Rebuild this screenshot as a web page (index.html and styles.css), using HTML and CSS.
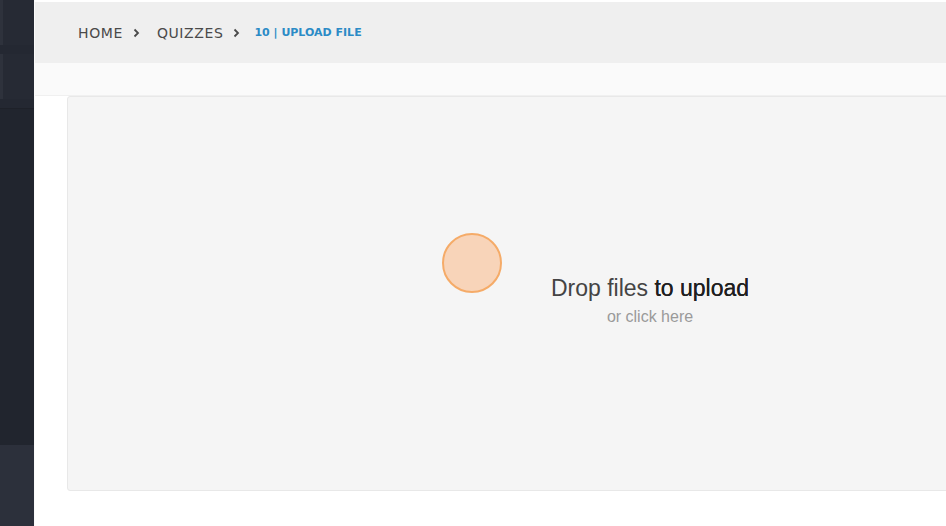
FILE: index.html
```html
<!DOCTYPE html>
<html lang="en">
<head>
    <meta charset="UTF-8">
    <meta name="viewport" content="width=device-width, initial-scale=1.0">
    <title>Quizzes - Upload File</title>
    <link rel="stylesheet" href="styles.css">
</head>
<body>
    <div class="layout">
        <aside class="sidebar">
            <div class="side-item"></div>
            <div class="side-item"></div>
            <div class="side-menu"></div>
            <div class="side-footer"></div>
        </aside>

        <main class="main">
            <div class="breadcrumb">
                <a class="crumb" href="#">HOME</a>
                <svg class="sep" width="7" height="10" viewBox="0 0 7 10"><path d="M1.5 1.5 L5 5 L1.5 8.5" fill="none" stroke="#4a4a4a" stroke-width="1.8"/></svg>
                <a class="crumb" href="#">QUIZZES</a>
                <svg class="sep" width="7" height="10" viewBox="0 0 7 10"><path d="M1.5 1.5 L5 5 L1.5 8.5" fill="none" stroke="#4a4a4a" stroke-width="1.8"/></svg>
                <span class="crumb current">10 | UPLOAD FILE</span>
            </div>
            <div class="subbar"></div>

            <div class="content">
                <div class="dropzone">
                    <p class="drop-title">Drop files <strong>to upload</strong></p>
                    <p class="drop-sub">or click here</p>
                </div>
            </div>
        </main>
    </div>

    <!-- click marker -->
    <div class="click-dot"></div>
</body>
</html>
```

FILE: styles.css
```css
body {
    margin: 0;
    overflow: hidden;
    background-color: #fff;
    font-family: "Liberation Sans", Arial, sans-serif;
}

.layout {
    display: flex;
    height: 526px;
}

.sidebar {
    width: 34px;
    flex-shrink: 0;
    display: flex;
    flex-direction: column;
    background-color: #242832;
}

.side-item {
    height: 45px;
    margin-bottom: 9px;
    background-color: #262a34;
    border-left: 3px solid #2e323c;
}

.side-menu {
    flex: 1;
    background-color: #21252e;
    border-top: 1px solid #1e2129;
}

.side-footer {
    height: 81px;
    background-color: #2c303b;
}

.main {
    flex: 1;
    min-width: 0;
    display: flex;
    flex-direction: column;
    border-left: 1px solid #fafafa;
}

.breadcrumb {
    margin-top: 2px;
    height: 61px;
    display: flex;
    align-items: center;
    padding-left: 43px;
    background-color: #efefef;
    font-family: "DejaVu Sans", sans-serif;
    font-size: 14px;
    letter-spacing: 0.6px;
}

.crumb {
    color: #4a4a4a;
    text-decoration: none;
}

.sep {
    margin: 0 17px 0 10px;
}

.current {
    margin-left: -3px;
    color: #2b8bc6;
    font-weight: bold;
    font-size: 11px;
    letter-spacing: 0;
}

.subbar {
    height: 32px;
    background-color: #fafafa;
    border-bottom: 1px solid #f0f0f0;
}

.content {
    padding-left: 32px;
}

.dropzone {
    width: 1166px;
    height: 395px;
    box-sizing: border-box;
    display: flex;
    flex-direction: column;
    align-items: center;
    justify-content: center;
    padding-top: 14px;
    background-color: #f5f5f5;
    border: 1px solid #e8e8e8;
    border-radius: 3px;
}

.drop-title {
    margin: 0;
    font-size: 23px;
    color: #444;
}

.drop-title strong {
    font-weight: normal;
    color: #1f1f1f;
    text-shadow: 0 0 0.4px #1f1f1f;
}

.drop-sub {
    margin: 6px 0 0;
    font-size: 16px;
    color: #9a9a9a;
}

.click-dot {
    position: absolute;
    left: 442px;
    top: 233px;
    width: 56px;
    height: 56px;
    border-radius: 50%;
    background-color: #f8d4b9;
    border: 2px solid #f5ab68;
}
```
